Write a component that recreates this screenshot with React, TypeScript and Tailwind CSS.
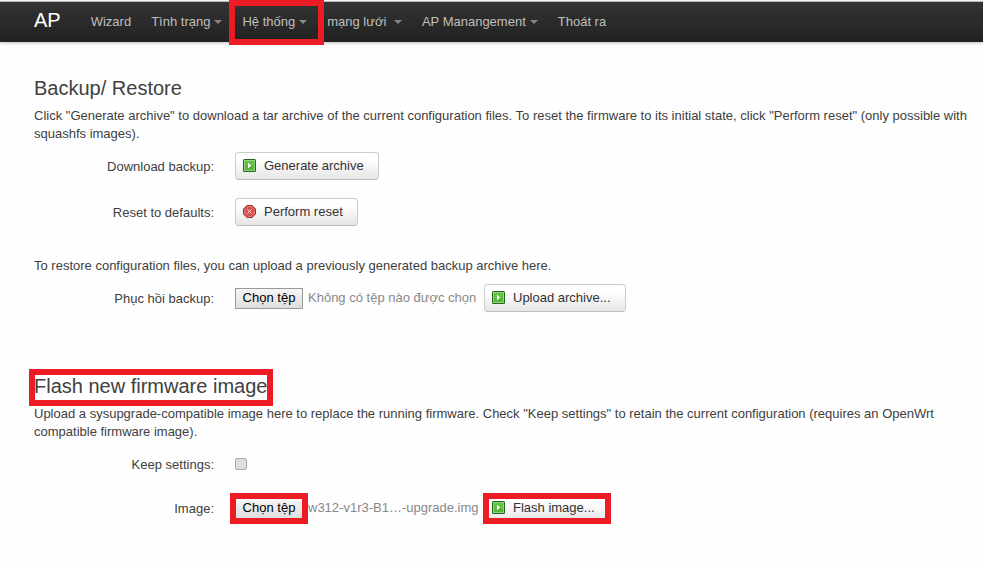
import { useRef } from 'react';
import type { ReactNode } from 'react';

const navItems = [
  { label: 'Wizard' },
  { label: 'Tình trạng', menu: true },
  { label: 'Hệ thống', menu: true, marked: true },
  { label: 'mạng lưới ', menu: true },
  { label: 'AP Manangement', menu: true },
  { label: 'Thoát ra' },
];

function ApplyIcon() {
  return (
    <svg className="size-[13px] shrink-0" viewBox="0 0 13 13" aria-hidden="true">
      <rect x="0" y="0" width="13" height="13" rx="1.5" fill="#23651a" />
      <rect x="1" y="1" width="11" height="11" fill="#8fd678" />
      <rect x="2" y="2" width="9" height="9" fill="#62c043" />
      <rect x="2" y="7" width="9" height="4" fill="#57b53a" />
      <path d="M5 4h1v1h1v1h1v1h-1v1h-1v1h-1z" fill="#fff" />
    </svg>
  );
}

function ResetIcon() {
  return (
    <svg className="size-[13px] shrink-0" viewBox="0 0 13 13" aria-hidden="true">
      <path d="M4 0h5l4 4v5l-4 4H4L0 9V4z" fill="#a02a2c" />
      <path d="M4.400 1h4.200L12 4.400v4.200L8.600 12H4.400L1 8.600V4.400z" fill="#e87a7a" />
      <path d="M4.800 2h3.400L11 4.800v3.400L8.200 11H4.800L2 8.200V4.800z" fill="#dc4f50" />
      <path d="M4.500 4.500l4 4M8.500 4.500l-4 4" stroke="#fbe3e3" strokeWidth="1" />
    </svg>
  );
}

function Marked({ on, inset, children }: { on?: boolean; inset: string; children: ReactNode }) {
  return (
    <div className="relative w-fit">
      {children}
      {on && <div className={`pointer-events-none absolute border-6 border-[#ed1c24] ${inset}`} />}
    </div>
  );
}

function ActionButton({ id, icon, children }: { id?: string; icon: ReactNode; children: ReactNode }) {
  return (
    <button
      id={id}
      type="button"
      className="flex h-7 items-center gap-2 whitespace-nowrap rounded border border-[#ccc] border-b-[#bbb] bg-linear-to-b from-white from-25% to-[#e6e6e6] pr-3.5 pb-px pl-[7px] text-[#333]"
    >
      {icon}
      {children}
    </button>
  );
}

function FilePicker({ id, fileName, marked }: { id: string; fileName: string; marked?: boolean }) {
  const input = useRef<HTMLInputElement>(null);

  return (
    <div className="flex w-[249px] items-center gap-[5px]">
      <input ref={input} id={id} type="file" className="hidden" />
      <Marked on={marked} inset="-inset-[5px]">
        <button
          type="button"
          onClick={() => input.current?.click()}
          className="block h-[21px] w-[68px] whitespace-nowrap border border-[#999] bg-linear-to-b from-[#f6f6f6] to-[#dedede] text-black"
        >
          Chọn tệp
        </button>
      </Marked>
      <span className="whitespace-nowrap text-[#888]">{fileName}</span>
    </div>
  );
}

function Field({ label, htmlFor, children }: { label: string; htmlFor: string; children: ReactNode }) {
  return (
    <div className="flex min-h-7 items-center gap-[21px]">
      <label htmlFor={htmlFor} className="w-[180px] shrink-0 pt-0.5 text-right">
        {label}
      </label>
      <div className="flex items-center">{children}</div>
    </div>
  );
}

export default function App() {
  return (
    <div className="min-h-screen bg-[#fefefe] font-['Liberation_Sans',Arial,sans-serif] text-[13px] leading-[18px] text-[#404040]">
      <header className="mt-px flex h-[41px] items-center border-t border-[#bbb] bg-linear-to-b from-[#333] to-[#222] pl-[34px] shadow-[0_1px_3px_rgba(0,0,0,0.25)]">
        <a href="#" className="mr-5 pb-1 text-xl text-white">
          AP
        </a>
        <nav className="flex">
          {navItems.map((item) => (
            <Marked key={item.label} on={item.marked} inset="-top-[3px] -bottom-1 -right-[7px] -left-[3px]">
              <a href="#" className="flex items-center gap-1 whitespace-pre px-2.5 py-2.5 text-[#bfbfbf]">
                {item.label}
                {item.menu && <span className="border-x-4 border-t-4 border-x-transparent border-t-[#888]" />}
              </a>
            </Marked>
          ))}
        </nav>
      </header>

      <main className="pt-7 pr-3 pl-[34px]">
        <section>
          <h2 className="text-xl leading-9">Backup/ Restore</h2>
          <p className="mt-px">
            Click "Generate archive" to download a tar archive of the current configuration files. To reset the
            firmware to its initial state, click "Perform reset" (only possible with squashfs images).
          </p>
          <div className="mt-[9px] flex flex-col gap-[18px]">
            <Field label="Download backup:" htmlFor="download">
              <ActionButton id="download" icon={<ApplyIcon />}>
                Generate archive
              </ActionButton>
            </Field>
            <Field label="Reset to defaults:" htmlFor="reset">
              <ActionButton id="reset" icon={<ResetIcon />}>
                Perform reset
              </ActionButton>
            </Field>
          </div>
          <p className="mt-[31px] mb-[9px]">
            To restore configuration files, you can upload a previously generated backup archive here.
          </p>
          <Field label="Phục hồi backup:" htmlFor="archive">
            <FilePicker id="archive" fileName="Không có tệp nào được chọn" />
            <ActionButton icon={<ApplyIcon />}>Upload archive...</ActionButton>
          </Field>
        </section>

        <section className="mt-14">
          <Marked on inset="-left-[5px] -right-1.5 top-px -bottom-0.5">
            <h2 className="text-xl leading-9">Flash new firmware image</h2>
          </Marked>
          <p className="mt-px">
            Upload a sysupgrade-compatible image here to replace the running firmware. Check "Keep settings" to
            retain the current configuration (requires an OpenWrt compatible firmware image).
          </p>
          <div className="mt-[9px] flex flex-col gap-4">
            <Field label="Keep settings:" htmlFor="keep">
              <input
                id="keep"
                type="checkbox"
                className="size-3 appearance-none rounded-xs border border-[#aaa] bg-[#ddd] checked:bg-[#666]"
              />
            </Field>
            <Field label="Image:" htmlFor="image">
              <FilePicker id="image" fileName="w312-v1r3-B1…-upgrade.img" marked />
              <Marked on inset="-top-px -bottom-0.5 -inset-x-px">
                <ActionButton icon={<ApplyIcon />}>Flash image...</ActionButton>
              </Marked>
            </Field>
          </div>
        </section>
      </main>
    </div>
  );
}
